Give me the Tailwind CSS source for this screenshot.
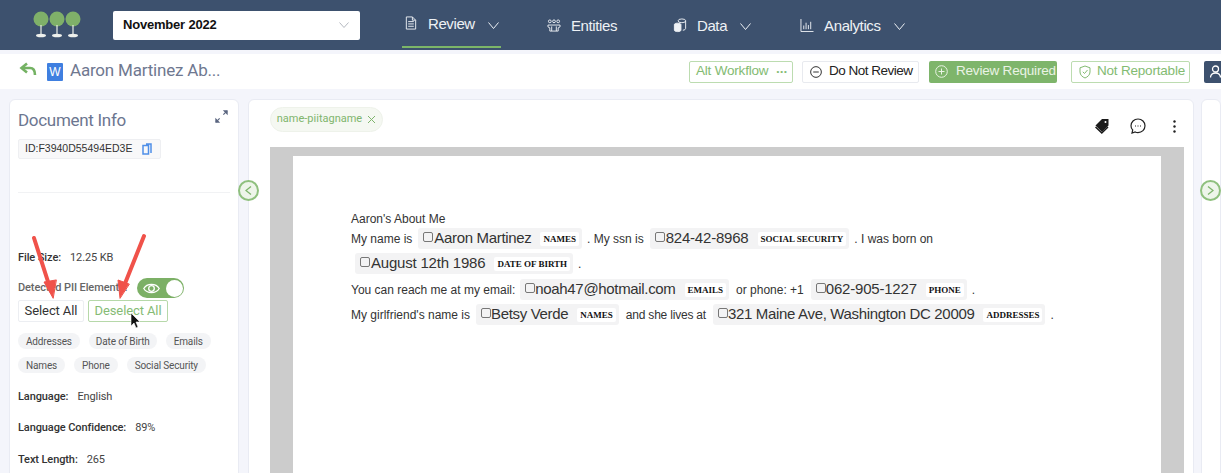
<!doctype html>
<html><head><meta charset="utf-8">
<script src="https://cdn.jsdelivr.net/npm/@tailwindcss/browser@4"></script>
</head>
<body class="m-0 w-[1221px] h-[473px] overflow-hidden relative bg-[#f4f5fb] font-['Roboto',sans-serif]">
<header class="h-[50px] bg-[#3d516e] flex items-center text-[#eef1f5] font-['Liberation_Sans',sans-serif] whitespace-nowrap">
  <svg class="ml-[33px] w-[48px] h-[30px] shrink-0" viewBox="0 0 48 30"><g fill="#7fb069"><ellipse cx="8" cy="9" rx="7.500" ry="7.500"/><ellipse cx="24" cy="9" rx="7.500" ry="7.500"/><ellipse cx="40" cy="9" rx="7.500" ry="7.500"/></g><g stroke="#e8ece4" stroke-width="1.200"><path d="M8 15v11M24 15v11M40 15v11"/></g><g fill="#eef0ec"><ellipse cx="8" cy="25.500" rx="5" ry="1.800"/><ellipse cx="24" cy="25.500" rx="5" ry="1.800"/><ellipse cx="40" cy="25.500" rx="5" ry="1.800"/></g></svg>
  <div class="ml-[32px] w-[247px] h-[29px] bg-white rounded-[2px] flex items-center justify-between pl-[10px] pr-[11px] text-[13px] tracking-[-0.2px] font-bold text-[#111]">November 2022
    <svg class="w-[10px] h-[6px]" viewBox="0 0 10 6" fill="none" stroke="#b5b9c0"><path d="M.5.500l4.500 5 4.500-5"/></svg></div>
  <div class="ml-[42px] w-[99px] h-[50px] flex items-center pl-[3px] relative shrink-0">
    <svg class="w-[12px] h-[14px] -mt-[4px] shrink-0" viewBox="0 0 12 15" fill="none" stroke="#eef1f5"><path d="M1 1h6.500L11 4.500V14H1zM3 6h6M3 8.500h6M3 11h6M7.500 1v3.500H11"/></svg>
    <span class="ml-[11px] text-[15px] tracking-[-0.4px] -mt-[2px]">Review</span>
    <svg class="ml-[13px] w-[11px] h-[7px] mt-[1px] shrink-0" viewBox="0 0 11 7" fill="none" stroke="#eef1f5"><path d="M.5.500l5 6 5-6"/></svg>
    <div class="absolute left-0 right-0 bottom-[2px] h-[2px] bg-[#7cb668]"></div>
  </div>
  <div class="ml-[46px] flex items-center">
    <svg class="w-[14px] h-[13px]" viewBox="0 0 15 14" fill="none" stroke="#eef1f5"><circle cx="3" cy="2.500" r="1.500"/><circle cx="7.500" cy="2.500" r="1.500"/><circle cx="12" cy="2.500" r="1.500"/><path d="M1 6.500h13v2l-2 1v3.500H3V9.500l-2-1zM5 8v5M10 8v5"/></svg>
    <span class="ml-[10px] text-[15px] tracking-[-0.4px] mt-[2px]">Entities</span>
  </div>
  <div class="ml-[56px] flex items-center">
    <svg class="w-[14px] h-[15px]" viewBox="0 0 14 16" fill="none" stroke="#eef1f5"><ellipse cx="9" cy="3" rx="4" ry="2"/><path d="M13 3v8c0 1-1 2-3 2"/><path fill="#eef1f5" d="M1 7c0-2 7-2 7 0v6c0 2-7 2-7 0z"/></svg>
    <span class="ml-[10px] text-[15px] tracking-[-0.4px] mt-[2px]">Data</span>
    <svg class="ml-[13px] w-[11px] h-[7px] mt-[3px]" viewBox="0 0 11 7" fill="none" stroke="#eef1f5"><path d="M.5.500l5 6 5-6"/></svg>
  </div>
  <div class="ml-[49px] flex items-center">
    <svg class="w-[14px] h-[13px]" viewBox="0 0 14 14" fill="none" stroke="#eef1f5"><path d="M.5 0v13.500H14M3.500 11V7M6 11V4M8.500 11V6.500M11 11V3"/></svg>
    <span class="ml-[10px] text-[15px] tracking-[-0.4px] mt-[2px]">Analytics</span>
    <svg class="ml-[13px] w-[11px] h-[7px] mt-[3px]" viewBox="0 0 11 7" fill="none" stroke="#eef1f5"><path d="M.5.500l5 6 5-6"/></svg>
  </div>
</header>
<div class="mt-[4px] h-[35px] bg-white flex items-center relative whitespace-nowrap">
  <svg class="ml-[19px] w-[18px] h-[15px] -mt-[5px]" viewBox="0 0 18 15" fill="none" stroke="#74b263" stroke-width="2.600"><path d="M8 1.500L2.500 6 8 10.500"/><path d="M3 6h8c3.500 0 5 2.500 5 7"/></svg>
  <div class="ml-[10px] w-[16px] h-[18px] bg-[#3f7fe0] rounded-[1px] flex items-center justify-center text-white text-[12px] font-['Liberation_Sans',sans-serif]">W</div>
  <span class="ml-[7px] text-[17px] tracking-[-0.2px] text-[#6f7890] -mt-[1px]">Aaron Martinez Ab...</span>
  <div class="ml-auto flex items-center text-[13.500px] tracking-[-0.2px] font-['Liberation_Sans',sans-serif]">
    <div class="w-[104px] h-[22px] border border-[#bcdcb0] rounded-[2px] flex items-center pl-[6px] text-[#83bb72]">Alt Workflow<span class="ml-[8px] tracking-[1px] text-[8px]">•••</span></div>
    <div class="ml-[9px] w-[117px] h-[22px] border border-[#e8eaef] rounded-[2px] flex items-center pl-[7px] text-[#222] tracking-[-0.5px]">
      <svg class="w-[12px] h-[12px] mr-[7px]" viewBox="0 0 13 13" fill="none" stroke="#222"><circle cx="6.500" cy="6.500" r="5.800"/><path d="M3.500 6.500h6"/></svg>Do Not Review</div>
    <div class="ml-[10px] w-[128px] h-[22px] bg-[#7eb56b] rounded-[2px] flex items-center pl-[6px] text-[#eaf3e5]">
      <svg class="w-[13px] h-[13px] mr-[8px]" viewBox="0 0 13 13" fill="none" stroke="#eaf3e5"><circle cx="6.500" cy="6.500" r="5.800"/><path d="M3.500 6.500h6M6.500 3.500v6"/></svg>Review Required</div>
    <div class="ml-[14px] w-[119px] h-[22px] border border-[#bcdcb0] rounded-[2px] flex items-center pl-[7px] text-[#83bb72]">
      <svg class="w-[12px] h-[14px] mr-[6px]" viewBox="0 0 12 14" fill="none" stroke="#83bb72"><path d="M6 1l5 1.800V7c0 3-2.500 5-5 6-2.500-1-5-3-5-6V2.800zM3.800 6.800L5.500 8.500 8.500 5"/></svg>Not Reportable</div>
    <div class="ml-[14px] w-[17px] h-[22px] bg-[#3d516e] rounded-l-[2px] flex items-center pl-[6px]">
      <svg class="w-[11px] h-[13px] shrink-0" viewBox="0 0 11 13" fill="none" stroke="#fff" stroke-width="1.300"><circle cx="5.500" cy="4" r="3"/><path d="M.5 12.500c0-6 10-6 10 0"/></svg></div>
  </div>
</div>
<main class="mt-[10px] flex pl-[9px] items-start">
  <aside class="w-[230px] h-[380px] bg-white border border-[#e9ebf3] rounded-t-[6px] pl-[8px] pr-[8px] relative">
    <div class="flex items-start justify-between">
      <h2 class="text-[17px] tracking-[-0.3px] text-[#6c7690] mt-[8px] leading-[24px]">Document Info</h2>
      <svg class="w-[13px] h-[13px] mt-[10px] mr-[2px]" viewBox="0 0 14 14" fill="none" stroke="#5b6680" stroke-width="1.300"><path d="M1 13l4-4M9 5l4-4"/><path fill="#5b6680" d="M1 13V10L4 13zM13 1v3L10 1z"/></svg>
    </div>
    <div class="mt-[7px] w-[143px] h-[20px] bg-[#f8f8f9] border border-[#eeeff2] rounded-[2px] flex items-center pl-[6px] text-[10.500px] text-[#333] font-['Liberation_Sans',sans-serif]">ID:F3940D55494ED3E
      <svg class="ml-[10px] w-[10px] h-[12px]" viewBox="0 0 10 12" fill="none" stroke="#4f8fe8" stroke-width="1.500"><path d="M1 2.500h5.500V11H1zM4 1h5v9"/></svg></div>
    <div class="mt-[33px] h-px w-[212px] bg-[#f1f2f4]"></div>
    <div class="mt-[58px] text-[11px] tracking-[-0.1px] leading-[14px] text-[#444]"><b class="font-medium text-[#333]">File Size:</b><span class="ml-[9px]">12.25 KB</span></div>
    <div class="mt-[13px] flex items-center h-[20px]">
      <span class="text-[11px] tracking-[-0.1px] text-[#666] whitespace-nowrap w-[119px] overflow-hidden font-medium">Detected PII Elements:</span>
      <div class="w-[47px] h-[20px] rounded-full bg-[#7cb066] flex items-center justify-between pl-[6px] pr-[1px]">
        <svg class="w-[17px] h-[13px]" viewBox="0 0 17 13" fill="none" stroke="#fff" stroke-width="1.300"><path d="M.8 6.500C4 1 13 1 16.200 6.500 13 12 4 12 .8 6.500z"/><circle cx="8.500" cy="6.500" r="2.800"/></svg>
        <div class="w-[17px] h-[17px] rounded-full bg-white"></div>
      </div>
    </div>
    <div class="mt-[2px] flex gap-[4px] text-[13px] tracking-[-0.1px]">
      <div class="w-[66px] h-[22px] border border-[#eceef2] rounded-[2px] flex items-center justify-center text-[#333]">Select All</div>
      <div class="w-[80px] h-[22px] border border-[#b6d8a9] rounded-[2px] flex items-center justify-center text-[#86bb75]">Deselect All</div>
    </div>
    <div class="mt-[11px] flex flex-wrap gap-x-[9px] gap-y-[8px] text-[10px] tracking-[-0.15px] text-[#555] w-[212px]">
      <span class="h-[16px] px-[8px] bg-[#f3f4f6] rounded-full flex items-center">Addresses</span>
      <span class="h-[16px] px-[7px] bg-[#f3f4f6] rounded-full flex items-center">Date of Birth</span>
      <span class="h-[16px] px-[8px] bg-[#f3f4f6] rounded-full flex items-center">Emails</span>
      <span class="h-[16px] px-[8px] bg-[#f3f4f6] rounded-full flex items-center">Names</span>
      <span class="h-[16px] px-[8px] bg-[#f3f4f6] rounded-full flex items-center">Phone</span>
      <span class="h-[16px] px-[8px] bg-[#f3f4f6] rounded-full flex items-center">Social Security</span>
    </div>
    <div class="mt-[17px] text-[11px] tracking-[-0.1px] leading-[14px] text-[#444]"><b class="font-medium text-[#333]">Language:</b><span class="ml-[9px]">English</span></div>
    <div class="mt-[17px] text-[11px] tracking-[-0.1px] leading-[14px] text-[#444]"><b class="font-medium text-[#333]">Language Confidence:</b><span class="ml-[9px]">89%</span></div>
    <div class="mt-[18px] text-[11px] tracking-[-0.1px] leading-[14px] text-[#444]"><b class="font-medium text-[#333]">Text Length:</b><span class="ml-[9px]">265</span></div>
  </aside>
  <section class="ml-[9px] w-[963px] h-[380px] bg-white border border-[#e9ebf3] rounded-t-[6px] pl-[21px] relative">
    <div class="flex items-start">
      <div class="mt-[7px] h-[25px] w-[113px] rounded-full bg-[#f5f8f2] border border-[#eef2ea] flex items-center justify-center text-[11px] text-[#7fb56d]">name-piitagname<svg class="ml-[5px] w-[9px] h-[9px]" viewBox="0 0 9 9" stroke="#7fb56d" fill="none"><path d="M1 1l7 7M8 1L1 8"/></svg></div>
      <div class="ml-auto mr-[17px] mt-[18px] flex items-center">
        <svg class="w-[14px] h-[15px]" viewBox="0 0 14 15" fill="#1a1a1a"><path d="M7 0h6.500v6.500L7 13 .5 6.500z"/><path d="M0 8.500l6.800 6.500 6.700-6.500-1-1-5.700 5.500L1 7.500z"/><circle cx="10.500" cy="3" r="1" fill="#fff"/></svg>
        <svg class="ml-[21px] w-[16px] h-[16px]" viewBox="0 0 16 16" fill="none" stroke="#222" stroke-width="1.200"><path d="M8 1c4 0 7 3 7 6.800s-3 6.800-7 6.800c-.9 0-2-.2-2.800-.6L2 15l.7-3C1.500 11 1 9.500 1 7.800 1 4 4 1 8 1z"/><path d="M5 8h1M7.500 8h1M10 8h1"/></svg>
        <svg class="ml-[27px] w-[3px] h-[13px]" viewBox="0 0 3 13" fill="#222"><circle cx="1.500" cy="1.500" r="1.200"/><circle cx="1.500" cy="6.500" r="1.200"/><circle cx="1.500" cy="11.500" r="1.200"/></svg>
      </div>
    </div>
    <div class="mt-[13px] w-[914px] h-[330px] bg-[#cccccc] pl-[23px] pr-[23px] pt-[9px]">
      <div class="bg-white h-[320px] pl-[58px] pt-[56px] text-[12px] text-[#333] font-['Liberation_Sans',sans-serif] whitespace-nowrap">
        <div class="leading-[15px]">Aaron's About Me</div>
        <div class="flex items-center h-[21px] mt-[1px]">My name is
          <span class="ml-[6px] h-[21px] pl-[5px] pr-[3px] rounded-[3px] bg-[#f3f3f4] flex items-center text-[15px] tracking-[-0.33px]"><i class="w-[10px] h-[10px] border border-[#777] rounded-[2px] mr-[1px] -mt-[3px]"></i>Aaron Martinez<b class="ml-[9px] px-[3px] py-[1px] bg-white rounded-[2px] text-[9px] tracking-normal leading-[12px] text-[#111] font-['Liberation_Serif',serif]">NAMES</b></span>
          <span class="ml-[5px]">. My ssn is</span>
          <span class="ml-[6px] h-[21px] pl-[5px] pr-[3px] rounded-[3px] bg-[#f3f3f4] flex items-center text-[15px] tracking-[-0.2px]"><i class="w-[10px] h-[10px] border border-[#777] rounded-[2px] mr-[1px] -mt-[3px]"></i>824-42-8968<b class="ml-[9px] px-[3px] py-[1px] bg-white rounded-[2px] text-[9px] tracking-normal leading-[12px] text-[#111] font-['Liberation_Serif',serif]">SOCIAL SECURITY</b></span>
          <span class="ml-[5px]">. I was born on</span>
        </div>
        <div class="flex items-center h-[21px] mt-[4px] pl-[4px]">
          <span class="h-[21px] pl-[5px] pr-[3px] rounded-[3px] bg-[#f3f3f4] flex items-center text-[15px] tracking-[-0.2px]"><i class="w-[10px] h-[10px] border border-[#777] rounded-[2px] mr-[1px] -mt-[3px]"></i>August 12th 1986<b class="ml-[9px] px-[3px] py-[1px] bg-white rounded-[2px] text-[9px] tracking-normal leading-[12px] text-[#111] font-['Liberation_Serif',serif]">DATE OF BIRTH</b></span>
          <span class="ml-[5px]">.</span>
        </div>
        <div class="flex items-center h-[21px] mt-[5px]">You can reach me at my email:
          <span class="ml-[5px] h-[21px] pl-[5px] pr-[3px] rounded-[3px] bg-[#f3f3f4] flex items-center text-[15px] tracking-[-0.33px]"><i class="w-[10px] h-[10px] border border-[#777] rounded-[2px] -mt-[3px]"></i>noah47@hotmail.com<b class="ml-[9px] px-[3px] py-[1px] bg-white rounded-[2px] text-[9px] tracking-normal leading-[12px] text-[#111] font-['Liberation_Serif',serif]">EMAILS</b></span>
          <span class="ml-[7px]">or phone: +1</span>
          <span class="ml-[7px] h-[21px] pl-[5px] pr-[3px] rounded-[3px] bg-[#f3f3f4] flex items-center text-[15px] tracking-[-0.2px]"><i class="w-[10px] h-[10px] border border-[#777] rounded-[2px] -mt-[3px]"></i>062-905-1227<b class="ml-[9px] px-[3px] py-[1px] bg-white rounded-[2px] text-[9px] tracking-normal leading-[12px] text-[#111] font-['Liberation_Serif',serif]">PHONE</b></span>
          <span class="ml-[5px]">.</span>
        </div>
        <div class="flex items-center h-[21px] mt-[4px]">My girlfriend's name is
          <span class="ml-[6px] h-[21px] pl-[5px] pr-[3px] rounded-[3px] bg-[#f3f3f4] flex items-center text-[15px] tracking-[-0.33px]"><i class="w-[10px] h-[10px] border border-[#777] rounded-[2px] -mt-[3px]"></i>Betsy Verde<b class="ml-[9px] px-[3px] py-[1px] bg-white rounded-[2px] text-[9px] tracking-normal leading-[12px] text-[#111] font-['Liberation_Serif',serif]">NAMES</b></span>
          <span class="ml-[7px] tracking-[-0.2px]">and she lives at</span>
          <span class="ml-[7px] h-[21px] pl-[5px] pr-[3px] rounded-[3px] bg-[#f3f3f4] flex items-center text-[15px] tracking-[-0.33px]"><i class="w-[10px] h-[10px] border border-[#777] rounded-[2px] -mt-[3px]"></i>321 Maine Ave, Washington DC 20009<b class="ml-[9px] px-[3px] py-[1px] bg-white rounded-[2px] text-[9px] tracking-normal leading-[12px] text-[#111] font-['Liberation_Serif',serif]">ADDRESSES</b></span>
          <span class="ml-[5px]">.</span>
        </div>
      </div>
    </div>
  </section>
  <div class="ml-[7px] w-[20px] h-[380px] bg-white border border-[#e9ebf3] rounded-t-[6px]"></div>
</main>
<div class="absolute left-[238px] top-[180px] w-[21px] h-[21px] rounded-full bg-[#eef5ea] border-2 border-[#8fc07e] flex items-center justify-center">
  <svg class="w-[7px] h-[9px]" viewBox="0 0 7 9" fill="none" stroke="#7fb56d" stroke-width="1.300"><path d="M6 .5L1 4.500 6 8.500"/></svg></div>
<div class="absolute left-[1200px] top-[180px] w-[21px] h-[21px] rounded-full bg-[#eef5ea] border-2 border-[#8fc07e] flex items-center justify-center">
  <svg class="w-[7px] h-[9px]" viewBox="0 0 7 9" fill="none" stroke="#7fb56d" stroke-width="1.300"><path d="M1 .5L6 4.500 1 8.500"/></svg></div>
<svg class="absolute left-0 top-0 w-[1221px] h-[473px] pointer-events-none" viewBox="0 0 1221 473">
  <g stroke="#f0524a" stroke-width="4" stroke-linecap="round" fill="#f0524a">
    <path d="M34 238L51 291" fill="none"/><path d="M144 236L122 291" fill="none"/>
    <path d="M53 298l-9-16 12-2z" stroke-width="1"/><path d="M120 298l-2-18 11 4z" stroke-width="1"/>
  </g>
  <path d="M131 313v13l3-3 2 5 2-1-2-5h4z" fill="#111" stroke="#fff" stroke-width=".6"/>
</svg>
</body></html>
